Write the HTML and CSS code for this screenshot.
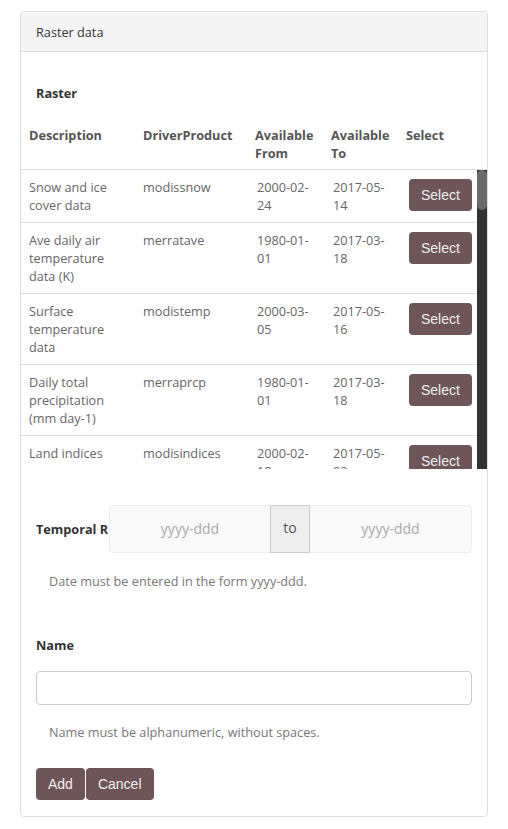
FILE: index.html
```html
<!DOCTYPE html>
<html>
<head>
<meta charset="utf-8">
<link rel="stylesheet" href="styles.css">
</head>
<body>
<div class="panel">
  <div class="panel-heading">Raster data</div>
  <div class="panel-body">
    <div class="section-title">Raster</div>
    <div class="table-wrap">
      <table class="tbl tbl-head">
        <colgroup><col class="c1"><col class="c2"><col class="c3"><col class="c4"><col></colgroup>
        <thead>
          <tr><th>Description</th><th>DriverProduct</th><th>Available From</th><th>Available To</th><th>Select</th></tr>
        </thead>
      </table>
      <div class="scroll-frame">
        <div class="scroller">
          <table class="tbl tbl-body">
            <colgroup><col class="c1"><col class="c2"><col class="c3"><col class="c4"><col></colgroup>
            <tbody>
              <tr><td>Snow and ice cover data</td><td>modissnow</td><td>2000-02-24</td><td>2017-05-14</td><td class="sel"><button class="btn">Select</button></td></tr>
              <tr><td>Ave daily air temperature data (K)</td><td>merratave</td><td>1980-01-01</td><td>2017-03-18</td><td class="sel"><button class="btn">Select</button></td></tr>
              <tr><td>Surface temperature data</td><td>modistemp</td><td>2000-03-05</td><td>2017-05-16</td><td class="sel"><button class="btn">Select</button></td></tr>
              <tr><td>Daily total precipitation (mm day-1)</td><td>merraprcp</td><td>1980-01-01</td><td>2017-03-18</td><td class="sel"><button class="btn">Select</button></td></tr>
              <tr><td>Land indices</td><td>modisindices</td><td>2000-02-18</td><td>2017-05-02</td><td class="sel"><button class="btn">Select</button></td></tr>
            </tbody>
          </table>
        </div>
        <div class="scrollbar"><div class="thumb"></div></div>
      </div>
    </div>

    <div class="form-row">
      <label class="row-label">Temporal Range</label>
      <div class="input-group">
        <input class="date-input" type="text" placeholder="yyyy-ddd">
        <span class="addon">to</span>
        <input class="date-input" type="text" placeholder="yyyy-ddd">
      </div>
    </div>
    <p class="help help-date">Date must be entered in the form yyyy-ddd.</p>

    <div class="section-title name-title">Name</div>
    <input class="name-input" type="text">
    <p class="help help-name">Name must be alphanumeric, without spaces.</p>

    <div class="actions">
      <button class="btn">Add</button>
      <button class="btn">Cancel</button>
    </div>
  </div>
</div>
</body>
</html>
```
FILE: styles.css
```css
* { box-sizing: border-box; }
html, body { margin: 0; padding: 0; background: #fff; }
body {
  font-family: "Open Sans", "Liberation Sans", sans-serif;
  font-size: 12.7px;
  line-height: 18.5px;
  color: #555;
  padding: 11px 20px 0 20px;
}
.panel {
  width: 468px;
  border: 1px solid #ddd;
  border-radius: 4px;
  background: #fff;
}
.panel-heading {
  height: 40px;
  background: #f5f5f5;
  border-bottom: 1px solid #ddd;
  border-radius: 3px 3px 0 0;
  padding: 0 15px;
  line-height: 40px;
  color: #333;
}
.panel-body {
  padding: 0 15px 16px 15px;
}
.section-title {
  font-weight: bold;
  color: #333;
  margin-top: 32px;
}
.table-wrap {
  margin: 15px -15px 0 -15px;
}
.tbl {
  border-collapse: collapse;
  table-layout: fixed;
}
.tbl-head { width: 466px; }
.tbl-body { width: 456px; }
col.c1 { width: 114px; }
col.c2 { width: 112px; }
col.c3 { width: 76px; }
col.c4 { width: 75px; }
.tbl th {
  text-align: left;
  font-weight: bold;
  color: #555;
  padding: 8px 8px 6px 8px;
  vertical-align: top;
  border-bottom: 1px solid #ddd;
}
.tbl td {
  padding: 8px 8px 8px 8px;
  line-height: 18px;
  vertical-align: top;
  color: #666;
  border-top: 1px solid #ddd;
}
.tbl-body tr:first-child td { border-top: none; }
.tbl-body td:nth-child(3), .tbl-body td:nth-child(4) { padding-left: 10px; }
.tbl td.sel { padding: 9px 5px 0 11px; }
.scroll-frame {
  display: flex;
  width: 466px;
  height: 299px;
}
.scroller {
  width: 456px;
  height: 299px;
  overflow: hidden;
}
.scrollbar {
  width: 10px;
  height: 299px;
  background: #333;
  flex: none;
}
.thumb {
  width: 10px;
  height: 40px;
  background: #6b6b6b;
  border-radius: 5px;
}
.btn {
  font-family: "Liberation Sans", Arial, sans-serif;
  font-size: 14px;
  line-height: 20px;
  padding: 6px 12px;
  height: 32px;
  color: #eee;
  background: #6d5558;
  border: none;
  border-radius: 4px;
  cursor: pointer;
}
.form-row {
  display: flex;
  align-items: center;
  margin-top: 36px;
}
.row-label {
  width: 72px;
  flex: none;
  overflow: hidden;
  white-space: nowrap;
  font-weight: bold;
  color: #333;
  padding-top: 2px;
  margin-right: 1px;
}
.input-group {
  display: flex;
  width: 363px;
  height: 48px;
}
.date-input {
  flex: 1;
  min-width: 0;
  height: 48px;
  border: 1px solid #eee;
  background: #f9f9f9;
  text-align: center;
  font-family: "Open Sans", sans-serif;
  font-size: 14px;
  color: #555;
  outline: none;
}
.date-input:first-child { border-radius: 4px 0 0 4px; border-right: none; width: 161px; flex: none; }
.date-input:last-child { border-radius: 0 4px 4px 0; border-left: none; }
.date-input::placeholder { color: #aaa; }
.addon {
  width: 40px;
  flex: none;
  background: #eee;
  border: 1px solid #ccc;
  display: flex;
  align-items: center;
  justify-content: center;
  font-size: 14px;
  color: #555;
}
.help {
  margin: 0;
  padding-left: 13px;
  color: #777;
}
.help-date { margin-top: 19px; }
.name-title { margin-top: 46px; }
.name-input {
  display: block;
  width: 436px;
  height: 34px;
  margin-top: 16px;
  border: 1px solid #ccc;
  border-radius: 4px;
  background: #fff;
  outline: none;
}
.help-name { margin-top: 18px; }
.actions {
  display: flex;
  gap: 1px;
  margin-top: 27px;
}
```
